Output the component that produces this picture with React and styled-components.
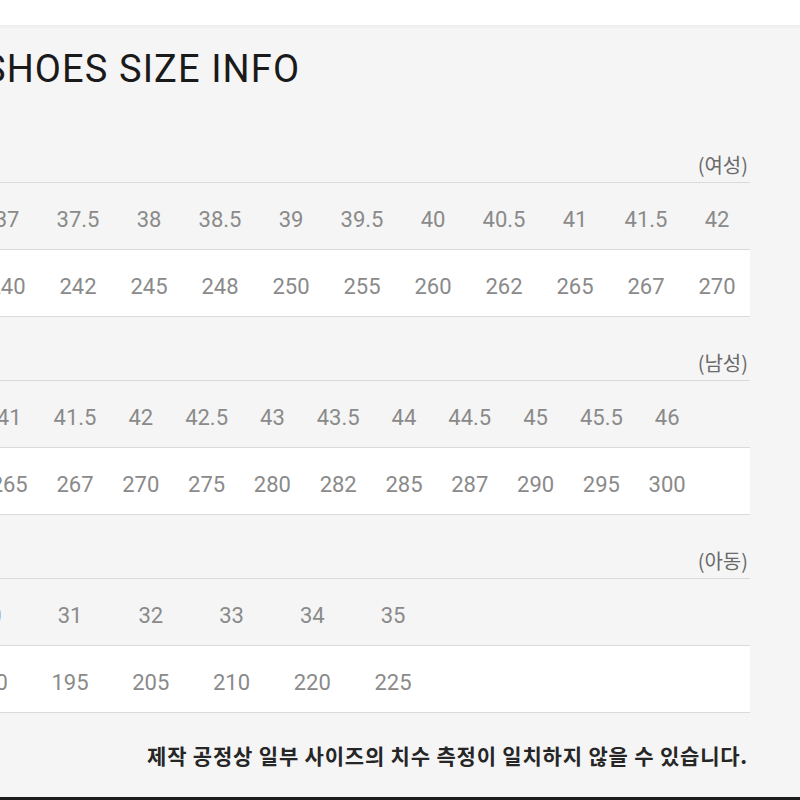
import styled, { createGlobalStyle } from "styled-components";

const sections = [
  {
    label: "(여성)",
    lead: 131.5,
    col: 71,
    eu: ["37", "37.5", "38", "38.5", "39", "39.5", "40", "40.5", "41", "41.5", "42"],
    mm: ["240", "242", "245", "248", "250", "255", "260", "262", "265", "267", "270"],
  },
  {
    label: "(남성)",
    lead: 136.3,
    col: 65.8,
    eu: ["41", "41.5", "42", "42.5", "43", "43.5", "44", "44.5", "45", "45.5", "46"],
    mm: ["265", "267", "270", "275", "280", "282", "285", "287", "290", "295", "300"],
  },
  {
    label: "(아동)",
    lead: 108.9,
    col: 80.75,
    eu: ["30", "31", "32", "33", "34", "35"],
    mm: ["190", "195", "205", "210", "220", "225"],
  },
];

const App = () => {
  return (
    <>
      <GlobalStyle />
      <Page>
        <TopBar />
        <Panel>
          {/* the chart is wider than the shot, its left side is cropped */}
          <Content>
            <Title>SHOES SIZE INFO</Title>
            {sections.map((s) => (
              <Section key={s.label}>
                <SectionHead>
                  <Label>{s.label}</Label>
                </SectionHead>
                <Row $lead={s.lead} $col={s.col} $n={s.eu.length}>
                  <LeadCell />
                  {s.eu.map((v) => (
                    <Cell key={v}>{v}</Cell>
                  ))}
                </Row>
                <Row $lead={s.lead} $col={s.col} $n={s.mm.length} $white>
                  <LeadCell />
                  {s.mm.map((v) => (
                    <Cell key={v}>{v}</Cell>
                  ))}
                </Row>
              </Section>
            ))}
            <Note>제작 공정상 일부 사이즈의 치수 측정이 일치하지 않을 수 있습니다.</Note>
          </Content>
        </Panel>
      </Page>
    </>
  );
};

const GlobalStyle = createGlobalStyle`
  html, body {
    margin: 0;
    padding: 0;
    background: #ffffff;
    overflow: hidden;
  }
  body {
    font-family: Roboto, "Noto Sans CJK KR", sans-serif;
  }
`;

const Page = styled.div`
  width: 800px;
  height: 800px;
  display: flex;
  flex-direction: column;
  overflow: hidden;
`;

const TopBar = styled.div`
  height: 25px;
  background: #ffffff;
`;

const Panel = styled.div`
  flex: 1;
  background: #f5f5f5;
  border-bottom: 3px solid #1c1c1c;
  box-shadow: inset 0 5px 5px -5px rgba(0, 0, 0, 0.08);
  overflow: hidden;
`;

const Content = styled.div`
  width: 910px;
  margin-left: -160px;
  padding-top: 25px;
`;

const Title = styled.h1`
  margin: 0 0 31px;
  padding-left: 143px;
  font-family: Roboto, sans-serif;
  font-weight: 400;
  font-size: 38px;
  line-height: 38px;
  letter-spacing: 1.1px;
  color: #1a1a1a;
`;

const Section = styled.div`
  display: flex;
  flex-direction: column;
`;

const SectionHead = styled.div`
  height: 64px;
  display: flex;
  justify-content: flex-end;
  align-items: flex-end;
  padding: 0 2px 7px 0;
  box-sizing: border-box;
  border-bottom: 1px solid #dadada;
`;

const Label = styled.span`
  font-family: "Noto Sans CJK KR", sans-serif;
  font-size: 20px;
  line-height: 20px;
  color: #6a6a6a;
`;

const Row = styled.div`
  display: grid;
  grid-template-columns: ${(p) => `${p.$lead}px repeat(${p.$n}, ${p.$col}px)`};
  align-items: center;
  height: 67px;
  padding-top: 6px;
  box-sizing: border-box;
  background: ${(p) => (p.$white ? "#ffffff" : "transparent")};
  border-bottom: 1px solid #dadada;
`;

const LeadCell = styled.span``;

const Cell = styled.span`
  text-align: center;
  white-space: nowrap;
  font-family: Roboto, sans-serif;
  font-size: 22px;
  color: #8a8a8a;
`;

const Note = styled.p`
  margin: 28px 0 0;
  padding-right: 2px;
  text-align: right;
  font-family: "Noto Sans CJK KR", sans-serif;
  font-weight: 700;
  font-size: 21px;
  line-height: 28px;
  letter-spacing: 0.8px;
  color: #262626;
`;

export default App;
